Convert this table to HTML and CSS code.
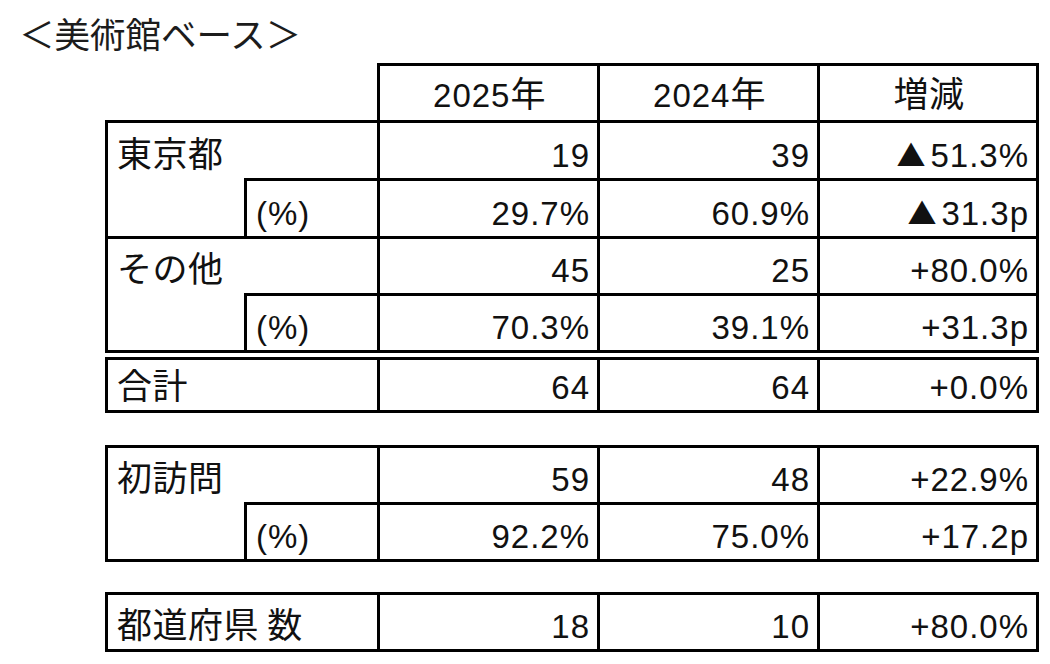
FILE: index.html
```html
<!DOCTYPE html>
<html lang="ja">
<head>
<meta charset="utf-8">
<title>美術館ベース</title>
<link rel="stylesheet" href="styles.css">
</head>
<body>
<div class="page">
  <div class="title">＜美術館ベース＞</div>

  <div class="head">
    <div class="hc"></div>
    <div class="hc h t l r"><span class="v">2025<span class="jp">年</span></span></div>
    <div class="hc h t r"><span class="v">2024<span class="jp">年</span></span></div>
    <div class="hc h t r"><span class="v"><span class="jp">増減</span></span></div>
  </div>

  <div class="grid rows-a">
    <div class="c l t nb"><span class="v"><span class="jp">東京都</span></span></div>
    <div class="c t r b"></div>
    <div class="c num t r b"><span class="v">19</span></div>
    <div class="c num t r b"><span class="v">39</span></div>
    <div class="c num t r b"><span class="v"><span class="tri">▲</span>51.3%</span></div>

    <div class="c l b"></div>
    <div class="c l r b"><span class="v">(%)</span></div>
    <div class="c num r b"><span class="v">29.7%</span></div>
    <div class="c num r b"><span class="v">60.9%</span></div>
    <div class="c num r b"><span class="v"><span class="tri">▲</span>31.3p</span></div>

    <div class="c l nb"><span class="v"><span class="jp">その他</span></span></div>
    <div class="c r b"></div>
    <div class="c num r b"><span class="v">45</span></div>
    <div class="c num r b"><span class="v">25</span></div>
    <div class="c num r b"><span class="v">+80.0%</span></div>

    <div class="c l b"></div>
    <div class="c l r b"><span class="v">(%)</span></div>
    <div class="c num r b"><span class="v">70.3%</span></div>
    <div class="c num r b"><span class="v">39.1%</span></div>
    <div class="c num r b"><span class="v">+31.3p</span></div>
  </div>

  <div class="grid rows-b">
    <div class="c span2 l t r b"><span class="v"><span class="jp">合計</span></span></div>
    <div class="c num t r b"><span class="v">64</span></div>
    <div class="c num t r b"><span class="v">64</span></div>
    <div class="c num t r b"><span class="v">+0.0%</span></div>
  </div>

  <div class="grid rows-c">
    <div class="c l t nb"><span class="v"><span class="jp">初訪問</span></span></div>
    <div class="c t r b"></div>
    <div class="c num t r b"><span class="v">59</span></div>
    <div class="c num t r b"><span class="v">48</span></div>
    <div class="c num t r b"><span class="v">+22.9%</span></div>

    <div class="c l b"></div>
    <div class="c l r b"><span class="v">(%)</span></div>
    <div class="c num r b"><span class="v">92.2%</span></div>
    <div class="c num r b"><span class="v">75.0%</span></div>
    <div class="c num r b"><span class="v">+17.2p</span></div>
  </div>

  <div class="grid rows-d">
    <div class="c span2 l t r b"><span class="v"><span class="jp">都道府県 数</span></span></div>
    <div class="c num t r b"><span class="v">18</span></div>
    <div class="c num t r b"><span class="v">10</span></div>
    <div class="c num t r b"><span class="v">+80.0%</span></div>
  </div>
</div>
</body>
</html>
```

FILE: styles.css
```css
html, body {
  margin: 0;
  padding: 0;
  background: #ffffff;
}

.page {
  width: 1050px;
  height: 664px;
  overflow: hidden;
  font-family: "Liberation Sans", "Noto Sans CJK JP", sans-serif;
  color: #111111;
}

.title {
  font-family: "Noto Sans CJK JP", sans-serif;
  font-size: 35.5px;
  line-height: 40px;
  padding: 13px 0 0 19px;
  height: 42px;
  color: #1c1c1c;
}

.v {
  display: block;
  line-height: 36px;
}

.jp {
  font-family: "Noto Sans CJK JP", sans-serif;
  font-size: 35px;
  letter-spacing: 0.5px;
  vertical-align: baseline;
}

.tri {
  font-family: "Noto Sans CJK JP", sans-serif;
  font-size: 29px;
  margin-right: 4px;
}

.head {
  display: grid;
  grid-template-columns: 272px 223px 220px 219px;
  grid-template-rows: 57px;
  margin: 8px 0 0 105px;
}

.grid {
  display: grid;
  grid-template-columns: 139px 136px 220px 220px 219px;
  margin-left: 105px;
}

.rows-a { grid-template-rows: 61px 58px 57px 57px; }
.rows-b { grid-template-rows: 56px; margin-top: 4px; }
.rows-c { grid-template-rows: 60px 57px; margin-top: 32px; }
.rows-d { grid-template-rows: 60px; margin-top: 30px; }

.c, .hc {
  box-sizing: border-box;
  display: flex;
  align-items: flex-end;
  font-size: 33px;
  line-height: 36px;
  letter-spacing: 1px;
  padding: 0 7px 4px 9px;
  white-space: nowrap;
}

.h {
  justify-content: center;
  padding-bottom: 6px;
}

.num {
  justify-content: flex-end;
}

.nb {
  padding-bottom: 7px;
}

.span2 {
  grid-column: span 2;
}

.t { border-top: 3px solid #000; }
.r { border-right: 3px solid #000; }
.b { border-bottom: 3px solid #000; }
.l { border-left: 3px solid #000; }
```
